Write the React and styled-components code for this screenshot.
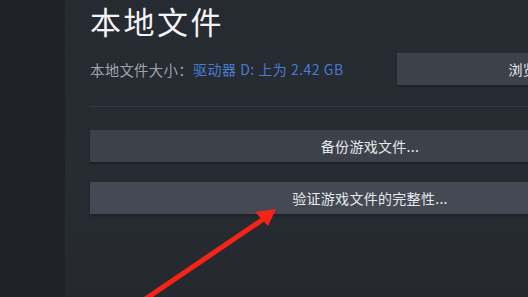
import React from "react";
import styled, { createGlobalStyle } from "styled-components";

const colors = {
  sidebar: "#1f2226",
  panel: "#272b32",
  title: "#f2f3f5",
  label: "#9ea3aa",
  link: "#4a7bd6",
  button: "#3d424a",
  buttonHot: "#444953",
  buttonText: "#e6e8ea",
  divider: "#353a42",
  arrow: "#f52417",
};

const GlobalStyle = createGlobalStyle`
  html, body {
    margin: 0;
    padding: 0;
    background: ${colors.panel};
    overflow: hidden;
  }
  body {
    font-family: "Noto Sans CJK SC", "Noto Sans", sans-serif;
  }
`;

const Page = styled.div`
  position: relative;
  width: 528px;
  height: 297px;
  display: flex;
  overflow: hidden;
`;

const Sidebar = styled.div`
  width: 65px;
  flex: none;
  background: ${colors.sidebar};
`;

const Panel = styled.div`
  flex: 1;
  background: linear-gradient(180deg, #262a31 0%, #272b32 60%, #25292f 100%);
  padding: 0 0 0 25px;
  display: flex;
  flex-direction: column;
  overflow: hidden;
`;

const Title = styled.h1`
  margin: 0;
  font-size: 31px;
  font-weight: 400;
  line-height: 44px;
  letter-spacing: 2.5px;
  color: ${colors.title};
  margin-top: -1px;
  white-space: nowrap;
`;

const SizeRow = styled.div`
  display: flex;
  align-items: center;
  height: 32px;
  margin-top: 10px;
  white-space: nowrap;
`;

const Label = styled.span`
  font-size: 14.4px;
  letter-spacing: 0.3px;
  color: ${colors.label};
  width: 103px;
  flex: none;
`;

const Link = styled.span`
  font-size: 14px;
  letter-spacing: 0.5px;
  color: ${colors.link};
  flex: none;
  width: 204px;
`;

const Button = styled.div`
  flex: none;
  width: ${(p) => p.width}px;
  height: 32px;
  display: flex;
  align-items: center;
  justify-content: center;
  background: ${(p) => (p.hot ? colors.buttonHot : colors.button)};
  box-shadow: 0 2px 2px rgba(0, 0, 0, 0.25);
  color: ${colors.buttonText};
  font-size: 14px;
  letter-spacing: 0.3px;
  white-space: nowrap;
`;

const Divider = styled.div`
  height: 1px;
  margin: 21px 0 0 0;
  width: 600px;
  background: ${colors.divider};
`;

const Actions = styled.div`
  display: flex;
  flex-direction: column;
  gap: 20px;
  margin-top: 23px;
`;

const Overlay = styled.svg`
  position: absolute;
  left: 0;
  top: 0;
  pointer-events: none;
`;

export default function App() {
  return (
    <>
      <GlobalStyle />
      <Page>
        <Sidebar />
        <Panel>
          <Title>本地文件</Title>
          <SizeRow>
            <Label>本地文件大小：</Label>
            <Link>驱动器 D: 上为 2.42 GB</Link>
            <Button width={264}>浏览...</Button>
          </SizeRow>
          <Divider />
          <Actions>
            <Button width={560}>备份游戏文件...</Button>
            <Button width={560} hot>
              验证游戏文件的完整性...
            </Button>
          </Actions>
        </Panel>
        <Overlay width="528" height="297" viewBox="0 0 528 297">
          <line
            x1="138"
            y1="304"
            x2="265"
            y2="218"
            stroke={colors.arrow}
            strokeWidth="5"
          />
          <polygon points="276,209 255,212 268,226" fill={colors.arrow} />
        </Overlay>
      </Page>
    </>
  );
}
